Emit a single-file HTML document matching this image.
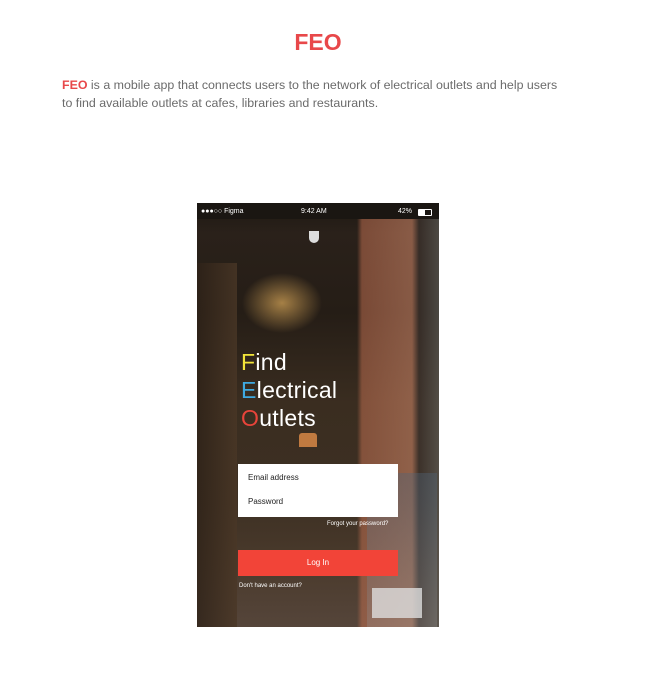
<!DOCTYPE html>
<html><head><style>
body{margin:0;width:653px;height:694px;background:#fff;position:relative;font-family:"Liberation Sans",sans-serif;overflow:hidden}
.t{position:absolute;left:0;width:636px;top:29px;text-align:center;color:#e8484a;font-weight:bold;font-size:23px}
.p{position:absolute;left:62px;top:76px;width:505px;font-size:12.4px;line-height:18px;color:#6b6b6b}
.p b{color:#e8484a}
.ph{position:absolute;left:197px;top:203px;width:242px;height:424px;overflow:hidden;
background:
linear-gradient(90deg,transparent 0,transparent 160px,rgba(190,110,80,.55) 165px,rgba(200,130,100,.6) 215px,rgba(60,50,45,.7) 222px,rgba(100,100,95,.6) 242px),
radial-gradient(ellipse 40px 30px at 85px 100px,rgba(220,170,90,.7),transparent),
linear-gradient(180deg,#1d1812 0,#2a211a 30px,#251d16 110px,#3a2d20 200px,#3d3023 300px,#4a3a2c 360px,#55453a 424px);}
.ph div{position:absolute}
.sb{top:5px;font-size:7px;color:#fff}
.big{left:44px;font-family:"Liberation Sans",sans-serif;font-size:23px;color:#fff;letter-spacing:.3px}
.in{left:41px;width:160px;background:#fff;font-size:8px;color:#222}
</style></head><body>
<div class="t">FEO</div>
<div class="p"><b>FEO</b> is a mobile app that connects users to the network of electrical outlets and help users to find available outlets at cafes, libraries and restaurants.</div>
<div class="ph">
<div style="left:0;top:0;width:242px;height:16px;background:#1a1612"></div>
<div class="sb" style="left:4px">●●●○○ Figma</div>
<div class="sb" style="left:104px">9:42 AM</div>
<div class="sb" style="left:201px">42%</div>
<div style="left:221px;top:6px;width:12px;height:5px;border:1px solid #fff;border-radius:1px"><div style="left:0;top:0;width:6px;height:5px;background:#fff"></div></div>
<div style="left:0;top:60px;width:40px;height:364px;background:linear-gradient(90deg,#2e2218,#4a3726);opacity:.8"></div>
<div style="left:112px;top:28px;width:10px;height:12px;background:#ddd;border-radius:0 0 6px 6px"></div>
<div style="left:102px;top:230px;width:18px;height:14px;background:#c07a40;border-radius:3px 3px 0 0"></div>
<div style="left:170px;top:270px;width:70px;height:154px;background:linear-gradient(180deg,rgba(80,100,120,.4),rgba(150,150,150,.3))"></div>
<div style="left:175px;top:385px;width:50px;height:30px;background:#ddd;opacity:.8"></div>
<div class="big" style="top:146px"><span style="color:#f2e53a">F</span>ind</div>
<div class="big" style="top:174px"><span style="color:#3fa9e0">E</span>lectrical</div>
<div class="big" style="top:202px"><span style="color:#e8443a">O</span>utlets</div>
<div class="in" style="top:261px;height:53px"></div>
<div class="in" style="top:270px;left:51px;background:none;width:auto">Email address</div>
<div class="in" style="top:294px;left:51px;background:none;width:auto">Password</div>
<div style="left:130px;top:318px;font-size:6px;color:#fff">Forgot your password?</div>
<div style="left:41px;top:347px;width:160px;height:26px;background:#f24438;color:#fff;font-size:8px;text-align:center;line-height:26px">Log In</div>
<div style="left:42px;top:380px;font-size:6px;color:#fff">Don't have an account?</div>
</div>
</body></html>
